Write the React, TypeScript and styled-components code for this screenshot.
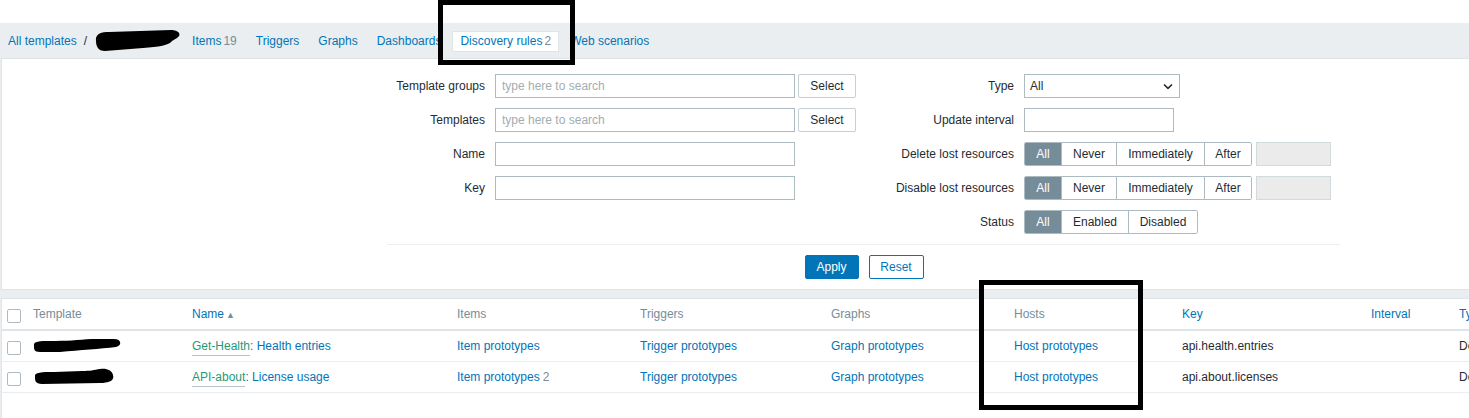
import styled, { createGlobalStyle } from "styled-components";

const GlobalStyle = createGlobalStyle`
  html, body {
    margin: 0;
    padding: 0;
    background: #ebeef0;
  }
  body {
    font-family: "Liberation Sans", Arial, sans-serif;
    font-size: 12px;
    color: #1f2c33;
  }
`;

const BLUE = "#0275b8";
const GREY = "#768d99";
const BORDER = "#dfe4e7";
const FIELD = "#acbbc2";

const Root = styled.div`
  position: relative;
  width: 1469px;
  height: 418px;
  overflow: hidden;
  background: #ebeef0;
  display: flex;
  flex-direction: column;
`;

const TopSpace = styled.div`
  height: 23px;
  flex-shrink: 0;
  background: #fff;
`;

const NavBar = styled.div`
  height: 35px;
  flex-shrink: 0;
  display: flex;
  align-items: center;
  padding: 1px 0 0 8px;
  box-sizing: border-box;
`;

const Crumb = styled.span`
  color: ${BLUE};
`;

const Slash = styled.span`
  color: #1f2c33;
  margin: 0 6px 0 7px;
`;

const Tabs = styled.div`
  display: flex;
  align-items: center;
  gap: 3px;
  margin-left: 3px;
`;

const Tab = styled.span<{ $active?: boolean }>`
  height: 21px;
  line-height: 21px;
  padding: 0 8px;
  color: ${BLUE};
  box-sizing: border-box;
  ${({ $active }) =>
    $active &&
    `
    background: #fff;
    border: 1px solid ${BORDER};
    line-height: 19px;
    padding: 0 7px;
  `}
`;

const Count = styled.span`
  color: ${GREY};
  margin-left: 3px;
`;

const NavCount = styled(Count)`
  margin-left: 2px;
`;

const FilterPanel = styled.div`
  flex-shrink: 0;
  margin-left: 1px;
  background: #fff;
  border: 1px solid ${BORDER};
  border-right: none;
  padding: 15px 0 10px;
`;

const FilterForm = styled.div`
  margin-left: 385px;
  width: 953px;
`;

const Columns = styled.div`
  display: flex;
  align-items: flex-start;
`;

const FormGrid = styled.div<{ $label: number; $width?: number }>`
  display: grid;
  grid-template-columns: ${({ $label }) => $label}px 1fr;
  align-content: start;
  column-gap: 10px;
  row-gap: 10px;
  align-items: center;
  ${({ $width }) => ($width ? `width: ${$width}px;` : "flex: 1;")}
`;

const Label = styled.label`
  text-align: right;
  white-space: nowrap;
`;

const Field = styled.div`
  display: flex;
  align-items: center;
  height: 24px;
`;

const TextInput = styled.input<{ $w: number }>`
  width: ${({ $w }) => $w}px;
  height: 24px;
  box-sizing: border-box;
  border: 1px solid ${FIELD};
  padding: 0 6px;
  font: inherit;
  color: #1f2c33;
  background: #fff;
  outline: none;
  &::placeholder {
    color: #a2adb3;
  }
  &:disabled {
    background: #ebebeb;
    border-color: #d3dade;
  }
`;

const PlainButton = styled.button`
  height: 24px;
  width: 58px;
  margin-left: 3px;
  box-sizing: border-box;
  border: 1px solid #c5cfd4;
  border-radius: 2px;
  background: #fff;
  font: inherit;
  color: #1f2c33;
  padding: 0;
`;

const SelectBox = styled.div`
  width: 156px;
  height: 24px;
  box-sizing: border-box;
  border: 1px solid ${FIELD};
  display: flex;
  align-items: center;
  justify-content: space-between;
  padding: 0 6px 0 5px;
`;

const Segmented = styled.div`
  display: flex;
  height: 24px;
  border: 1px solid ${FIELD};
  border-radius: 2px;
  box-sizing: border-box;
  overflow: hidden;
`;

const Segment = styled.span<{ $on?: boolean; $w: number }>`
  width: ${({ $w }) => $w}px;
  display: flex;
  align-items: center;
  justify-content: center;
  box-sizing: border-box;
  background: ${({ $on }) => ($on ? GREY : "#fff")};
  color: ${({ $on }) => ($on ? "#fff" : "#1f2c33")};
  & + & {
    border-left: 1px solid ${FIELD};
  }
`;

const DisabledBox = styled(TextInput)`
  margin-left: 4px;
`;

const Separator = styled.div`
  height: 1px;
  background: #ebeef0;
  margin: 10px 0 10px;
`;

const Actions = styled.div`
  display: flex;
  justify-content: center;
  gap: 10px;
  padding-left: 1px;
`;

const ActionButton = styled.button<{ $primary?: boolean }>`
  height: 24px;
  box-sizing: border-box;
  padding: 0;
  width: ${({ $primary }) => ($primary ? 54 : 55)}px;
  border: 1px solid ${BLUE};
  border-radius: 2px;
  font: inherit;
  background: ${({ $primary }) => ($primary ? BLUE : "#fff")};
  color: ${({ $primary }) => ($primary ? "#fff" : BLUE)};
`;

const TableWrap = styled.div`
  flex: 1;
  margin: 8px 0 0 1px;
  background: #fff;
  border: 1px solid ${BORDER};
  border-right: none;
  border-bottom: none;
  overflow: hidden;
`;

const Table = styled.table`
  border-collapse: collapse;
  table-layout: fixed;
  width: 1560px;
`;

const Th = styled.th<{ $sort?: boolean }>`
  height: 30px;
  padding: 0;
  text-align: left;
  font-weight: normal;
  color: ${({ $sort }) => ($sort ? BLUE : GREY)};
  border-bottom: 2px solid #dfe4e7;
  white-space: nowrap;
`;

const Td = styled.td`
  height: 30px;
  padding: 0;
  border-bottom: 1px solid #ebeef0;
  white-space: nowrap;
  overflow: hidden;
`;

const Check = styled.span`
  display: inline-block;
  width: 14px;
  height: 14px;
  box-sizing: border-box;
  border: 1px solid ${FIELD};
  border-radius: 2px;
  margin: 3px 0 0 5px;
  vertical-align: middle;
`;

const Link = styled.span`
  color: ${BLUE};
`;

const TemplateLink = styled.span`
  color: #1f9a7a;
  border-bottom: 1px solid #b7c4c9;
  padding-bottom: 2px;
`;

const SortArrow = styled.span`
  color: ${GREY};
  font-size: 9px;
  margin-left: 2px;
`;

const Annotation = styled.div<{ $x: number; $y: number; $w: number; $h: number }>`
  position: absolute;
  left: ${({ $x }) => $x}px;
  top: ${({ $y }) => $y}px;
  width: ${({ $w }) => $w}px;
  height: ${({ $h }) => $h}px;
  border: 5px solid #000;
  box-sizing: border-box;
  pointer-events: none;
`;

const BlobSvg = styled.svg`
  display: block;
`;

const CellBlob = styled.span`
  display: inline-block;
  vertical-align: middle;
  margin-left: -3px;
`;

const Chevron = () => (
  <svg width="10" height="7" viewBox="0 0 10 7">
    <path d="M1 1.5 L5 5.3 L9 1.5" fill="none" stroke="#1f2c33" strokeWidth="1.6" />
  </svg>
);

const HeaderBlob = () => (
  <BlobSvg width="88" height="24" viewBox="0 0 88 24">
    <path
      d="M3 12 C2 5 8 3 16 3 L78 1 C86 1 89 6 84 9 L79 12 C76 16 66 18 50 19 L12 22 C5 22 3 17 3 12 Z"
      fill="#000"
    />
  </BlobSvg>
);

const RowBlob = ({ variant }: { variant: number }) =>
  variant === 0 ? (
    <BlobSvg width="92" height="16" viewBox="0 0 92 16">
      <path
        d="M4 8 C3 3 10 3 20 3 C36 3 48 2 62 1 L84 1 C92 1 92 8 86 9 C70 11 50 12 30 14 L10 14 C4 14 4 11 4 8 Z"
        fill="#000"
      />
    </BlobSvg>
  ) : (
    <BlobSvg width="88" height="18" viewBox="0 0 88 18">
      <path
        d="M5 9 C4 4 12 4 24 4 L52 3 C60 3 64 2 70 1 C76 0 82 2 83 7 C85 13 78 15 70 15 L12 16 C5 16 5 12 5 9 Z"
        fill="#000"
      />
    </BlobSvg>
  );

type Row = {
  blob: number;
  template: string;
  name: string;
  items: number | null;
  key: string;
  type: string;
};

const rows: Row[] = [
  { blob: 0, template: "Get-Health", name: "Health entries", items: null, key: "api.health.entries", type: "Dependent item" },
  { blob: 1, template: "API-about", name: "License usage", items: 2, key: "api.about.licenses", type: "Dependent item" },
];

const colWidths = [31, 159, 265, 183, 191, 183, 168, 189, 88, 103];

const navTabs = [
  { label: "Items", count: 19 },
  { label: "Triggers" },
  { label: "Graphs" },
  { label: "Dashboards" },
  { label: "Discovery rules", count: 2, active: true },
  { label: "Web scenarios" },
];

export default function App() {
  return (
    <Root>
      <GlobalStyle />
      <TopSpace />
      <NavBar>
        <Crumb>All templates</Crumb>
        <Slash>/</Slash>
        <HeaderBlob />
        <Tabs>
          {navTabs.map((t) => (
            <Tab key={t.label} $active={t.active}>
              {t.label}
              {t.count !== undefined && <NavCount>{t.count}</NavCount>}
            </Tab>
          ))}
        </Tabs>
      </NavBar>

      <FilterPanel>
        <FilterForm>
          <Columns>
            <FormGrid $label={98} $width={479}>
              <Label>Template groups</Label>
              <Field>
                <TextInput $w={300} placeholder="type here to search" />
                <PlainButton>Select</PlainButton>
              </Field>
              <Label>Templates</Label>
              <Field>
                <TextInput $w={300} placeholder="type here to search" />
                <PlainButton>Select</PlainButton>
              </Field>
              <Label>Name</Label>
              <Field>
                <TextInput $w={300} />
              </Field>
              <Label>Key</Label>
              <Field>
                <TextInput $w={300} />
              </Field>
            </FormGrid>
            <FormGrid $label={148}>
              <Label>Type</Label>
              <Field>
                <SelectBox>
                  <span>All</span>
                  <Chevron />
                </SelectBox>
              </Field>
              <Label>Update interval</Label>
              <Field>
                <TextInput $w={150} />
              </Field>
              <Label>Delete lost resources</Label>
              <Field>
                <Segmented>
                  <Segment $on $w={36}>All</Segment>
                  <Segment $w={55}>Never</Segment>
                  <Segment $w={88}>Immediately</Segment>
                  <Segment $w={47}>After</Segment>
                </Segmented>
                <DisabledBox $w={75} disabled />
              </Field>
              <Label>Disable lost resources</Label>
              <Field>
                <Segmented>
                  <Segment $on $w={36}>All</Segment>
                  <Segment $w={55}>Never</Segment>
                  <Segment $w={88}>Immediately</Segment>
                  <Segment $w={47}>After</Segment>
                </Segmented>
                <DisabledBox $w={75} disabled />
              </Field>
              <Label>Status</Label>
              <Field>
                <Segmented>
                  <Segment $on $w={36}>All</Segment>
                  <Segment $w={67}>Enabled</Segment>
                  <Segment $w={69}>Disabled</Segment>
                </Segmented>
              </Field>
            </FormGrid>
          </Columns>
          <Separator />
          <Actions>
            <ActionButton $primary>Apply</ActionButton>
            <ActionButton>Reset</ActionButton>
          </Actions>
        </FilterForm>
      </FilterPanel>

      <TableWrap>
        <Table>
          <colgroup>
            {colWidths.map((w, i) => (
              <col key={i} style={{ width: w }} />
            ))}
          </colgroup>
          <thead>
            <tr>
              <Th>
                <Check />
              </Th>
              <Th>Template</Th>
              <Th $sort>
                Name<SortArrow>▲</SortArrow>
              </Th>
              <Th>Items</Th>
              <Th>Triggers</Th>
              <Th>Graphs</Th>
              <Th>Hosts</Th>
              <Th $sort>Key</Th>
              <Th $sort>Interval</Th>
              <Th $sort>Type</Th>
            </tr>
          </thead>
          <tbody>
            {rows.map((r) => (
              <tr key={r.key}>
                <Td>
                  <Check />
                </Td>
                <Td>
                  <CellBlob>
                    <RowBlob variant={r.blob} />
                  </CellBlob>
                </Td>
                <Td>
                  <TemplateLink>{r.template}</TemplateLink>
                  <Link>: {r.name}</Link>
                </Td>
                <Td>
                  <Link>Item prototypes</Link>
                  {r.items !== null && <Count>{r.items}</Count>}
                </Td>
                <Td>
                  <Link>Trigger prototypes</Link>
                </Td>
                <Td>
                  <Link>Graph prototypes</Link>
                </Td>
                <Td>
                  <Link>Host prototypes</Link>
                </Td>
                <Td>{r.key}</Td>
                <Td />
                <Td>{r.type}</Td>
              </tr>
            ))}
          </tbody>
        </Table>
      </TableWrap>

      <Annotation $x={438} $y={0} $w={137} $h={65} />
      <Annotation $x={979} $y={280} $w={164} $h={130} />
    </Root>
  );
}
